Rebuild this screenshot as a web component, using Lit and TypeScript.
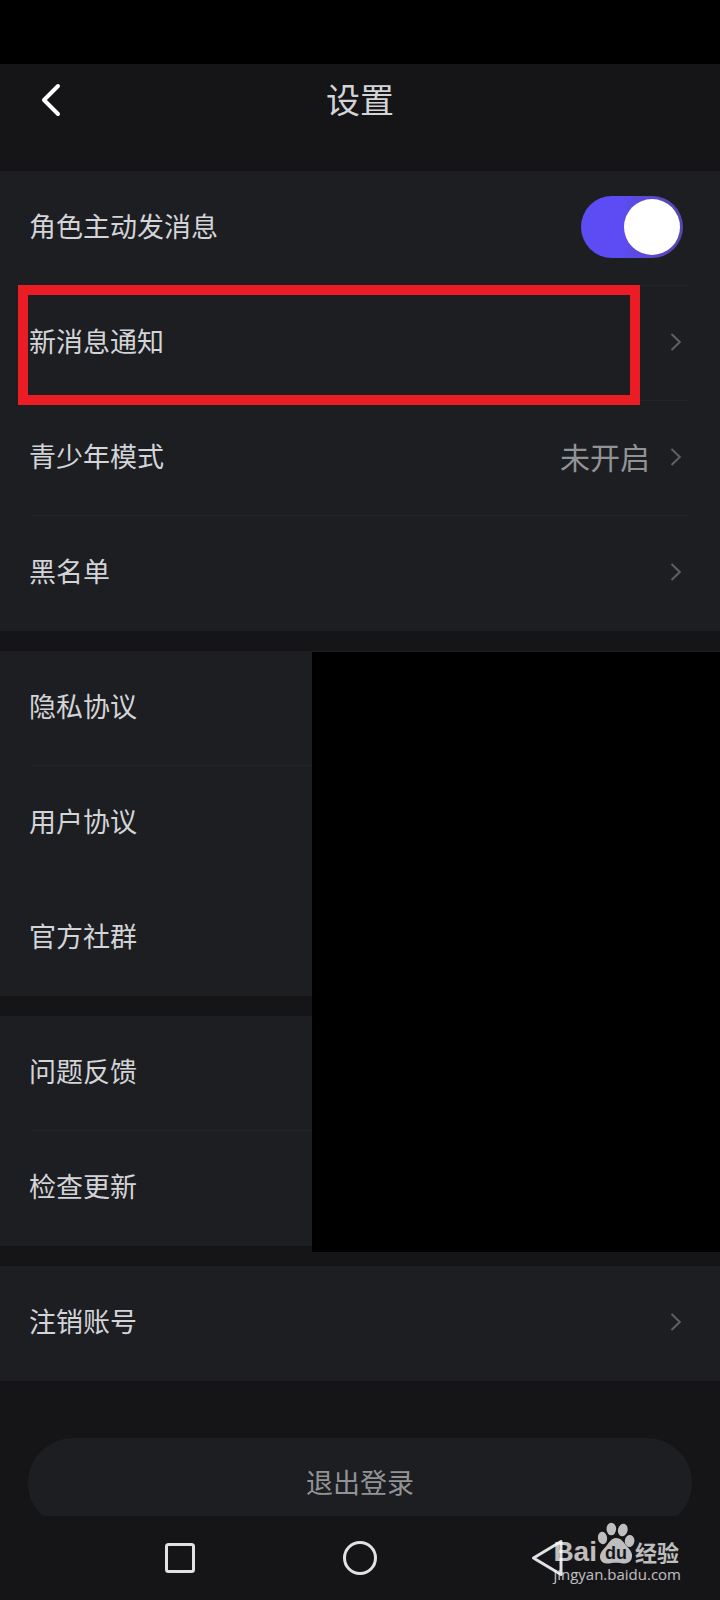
import { LitElement, html, css, svg, nothing } from "lit";
import { customElement, property, state } from "lit/decorators.js";

interface Item {
  label: string;
  value?: string;
  divider?: boolean;
  marked?: boolean;
}

const GENERAL: Item[] = [
  { label: "新消息通知", divider: true, marked: true },
  { label: "青少年模式", value: "未开启", divider: true },
  { label: "黑名单" },
];
const LEGAL: Item[] = [
  { label: "隐私协议", divider: true },
  { label: "用户协议" },
  { label: "官方社群" },
];
const SUPPORT: Item[] = [
  { label: "问题反馈", divider: true },
  { label: "检查更新" },
];
const ACCOUNT: Item[] = [{ label: "注销账号" }];

@customElement("settings-row")
export class SettingsRow extends LitElement {
  @property() label = "";
  @property() value = "";

  static styles = css`
    :host {
      display: block;
    }
    .row {
      box-sizing: border-box;
      width: 100%;
      height: 115px;
      padding: 0 38px 4px 29px;
      display: flex;
      align-items: center;
      border: 0;
      background: none;
      color: #d3d4d8;
      font: inherit;
      font-size: 27px;
      line-height: 40px;
      text-align: left;
      cursor: pointer;
    }
    .label {
      flex: 1;
      padding-bottom: 2px;
    }
    .value {
      margin-right: 20px;
      padding-bottom: 2px;
      font-size: 30px;
      color: #929397;
    }
    .chevron {
      display: block;
      width: 12px;
      height: 20px;
      fill: none;
      stroke: #5f6064;
      stroke-width: 2;
    }
  `;

  render() {
    return html`
      <button class="row" type="button">
        <span class="label">${this.label}</span>
        ${this.value ? html`<span class="value">${this.value}</span>` : nothing}
        <svg class="chevron" viewBox="0 0 12 20" aria-hidden="true">
          <path d="M1.5 2 L9.800 10 L1.5 18" />
        </svg>
      </button>
    `;
  }
}

@customElement("site-watermark")
export class SiteWatermark extends LitElement {
  static styles = css`
    :host {
      display: block;
      color: #fff;
      opacity: 0.72;
      pointer-events: none;
    }
    .brand {
      display: flex;
      align-items: flex-end;
      height: 42px;
    }
    .bai {
      font: bold 28px/24px "Liberation Sans", sans-serif;
    }
    .paw {
      display: block;
      width: 38px;
      height: 42px;
      fill: currentColor;
    }
    .du {
      font: bold 18px "Liberation Sans", sans-serif;
      fill: #161618;
    }
    .cn {
      font: bold 22px/26px "Noto Sans CJK SC", sans-serif;
    }
    .url {
      font: 500 15px/20px "Open Sans", sans-serif;
    }
  `;

  render() {
    return html`
      <div class="brand">
        <span class="bai">Bai</span>
        <svg class="paw" viewBox="0 0 38 42" aria-hidden="true">
          ${svg`
            <ellipse cx="5.5" cy="16" rx="4.6" ry="6.2" transform="rotate(-8 5.5 16)" />
            <ellipse cx="14.3" cy="7" rx="4.8" ry="6.3" />
            <ellipse cx="25.8" cy="8" rx="4.8" ry="6.3" transform="rotate(12 25.8 8)" />
            <ellipse cx="32.6" cy="19" rx="4.8" ry="6" transform="rotate(8 32.6 19)" />
            <path d="M19 16 C24.500 16 27 21 30 24.500 C33.500 28 36 31.500 34.800 36 C33.500 41 29 42 24.500 41.300 C21 40.700 17 40.700 13.500 41.300 C8.500 42 4.200 41 3.200 36.500 C2.200 32 5 28.500 8.500 25 C12 21.500 13.500 16 19 16 Z" />
            <text class="du" x="19" y="37" text-anchor="middle">du</text>
          `}
        </svg>
        <span class="cn">经验</span>
      </div>
      <div class="url">jingyan.baidu.com</div>
    `;
  }
}

@customElement("app-root")
export class AppRoot extends LitElement {
  @state() private proactive = true;

  static styles = css`
    :host {
      display: flex;
      flex-direction: column;
      height: 100vh;
      overflow: hidden;
      position: relative;
      background: #151517;
      color: #d3d4d8;
      font-family: "Noto Sans CJK SC", sans-serif;
    }
    .status {
      flex: none;
      height: 64px;
      background: #000;
    }
    .header {
      flex: none;
      display: grid;
      grid-template-columns: 60px 1fr 60px;
      align-items: center;
      height: 72px;
      margin-bottom: 35px;
      padding: 0 21px;
    }
    .back {
      display: grid;
      place-items: center;
      height: 60px;
      padding: 0;
      border: 0;
      background: none;
      cursor: pointer;
    }
    .back svg {
      width: 20px;
      height: 34px;
      fill: none;
      stroke: #fff;
      stroke-width: 4;
      stroke-linecap: round;
      stroke-linejoin: round;
    }
    .title {
      margin: 0;
      padding-bottom: 2px;
      font-size: 34px;
      line-height: 50px;
      font-weight: 400;
      text-align: center;
    }
    .content {
      flex: 1;
      min-height: 0;
      overflow: hidden;
    }
    .groups,
    .covered {
      display: flex;
      flex-direction: column;
      gap: 20px;
    }
    .covered {
      position: relative;
    }
    .cover {
      position: absolute;
      top: 1px;
      bottom: -6px;
      left: 312px;
      right: 0;
      background: #000;
    }
    .card {
      background: #1d1e21;
    }
    .item {
      position: relative;
    }
    .divider::after {
      content: "";
      position: absolute;
      left: 32px;
      right: 32px;
      bottom: 0;
      height: 1px;
      background: #242528;
    }
    .marker {
      position: absolute;
      z-index: 1;
      top: -1px;
      left: 18px;
      right: 80px;
      height: 100px;
      border: 10px solid #ec1c24;
      pointer-events: none;
    }
    .switch-row {
      box-sizing: border-box;
      display: flex;
      align-items: center;
      justify-content: space-between;
      height: 115px;
      padding: 0 37px 4px 29px;
      font-size: 27px;
      line-height: 40px;
    }
    .switch-label {
      padding-bottom: 2px;
    }
    .switch {
      appearance: none;
      box-sizing: border-box;
      display: flex;
      width: 102px;
      height: 62px;
      margin: 0;
      padding: 3px;
      border-radius: 31px;
      background: #44454a;
      cursor: pointer;
    }
    .switch:checked {
      justify-content: flex-end;
      background: linear-gradient(90deg, #5d4cf3 0 40%, #5647b4 90%);
    }
    .switch::before {
      content: "";
      width: 56px;
      height: 56px;
      border-radius: 50%;
      background: #fff;
    }
    .logout {
      display: block;
      width: calc(100% - 56px);
      height: 90px;
      margin: 57px 28px 0;
      padding: 0 0 2px;
      border: 0;
      border-radius: 45px;
      background: #1d1e21;
      color: #929397;
      font: inherit;
      font-size: 27px;
      line-height: 40px;
      cursor: pointer;
    }
    .nav {
      flex: none;
      display: grid;
      grid-template-columns: repeat(3, 1fr);
      height: 84px;
      padding: 0 12.5%;
    }
    .key {
      display: grid;
      place-items: center;
      padding: 0;
      border: 0;
      background: none;
      cursor: pointer;
    }
    .key svg {
      width: 50px;
      height: 40px;
      fill: none;
      stroke: #e2e2e3;
      stroke-width: 3;
      stroke-linejoin: round;
    }
    .watermark {
      position: absolute;
      right: 39px;
      bottom: 16px;
    }
  `;

  private group(items: Item[]) {
    return items.map(
      (item) => html`
        <div class="item ${item.divider ? "divider" : ""}">
          <settings-row .label=${item.label} .value=${item.value ?? ""}></settings-row>
          ${item.marked ? html`<div class="marker"></div>` : nothing}
        </div>
      `
    );
  }

  private toggle(e: Event) {
    this.proactive = (e.target as HTMLInputElement).checked;
  }

  render() {
    return html`
      <div class="status"></div>
      <header class="header">
        <button class="back" type="button" aria-label="返回">
          <svg viewBox="0 0 20 34"><path d="M17 3 L3 17 L17 31" /></svg>
        </button>
        <h1 class="title">设置</h1>
      </header>
      <main class="content">
        <div class="groups">
          <section class="card">
            <div class="item divider">
              <div class="switch-row">
                <label class="switch-label" for="proactive">角色主动发消息</label>
                <input
                  id="proactive"
                  class="switch"
                  type="checkbox"
                  role="switch"
                  .checked=${this.proactive}
                  @change=${this.toggle}
                />
              </div>
            </div>
            ${this.group(GENERAL)}
          </section>
          <div class="covered">
            <section class="card">${this.group(LEGAL)}</section>
            <section class="card">${this.group(SUPPORT)}</section>
            <div class="cover"></div>
          </div>
          <section class="card">${this.group(ACCOUNT)}</section>
        </div>
        <button class="logout" type="button">退出登录</button>
      </main>
      <nav class="nav">
        <button class="key" type="button" aria-label="最近任务">
          <svg viewBox="0 0 50 40"><rect x="11.500" y="6.500" width="27" height="27" rx="2" /></svg>
        </button>
        <button class="key" type="button" aria-label="主屏幕">
          <svg viewBox="0 0 50 40"><circle cx="25" cy="20" r="15.500" /></svg>
        </button>
        <button class="key" type="button" aria-label="后退">
          <svg viewBox="0 0 50 40"><path d="M18.500 20 L46 3.500 V36.500 Z" /></svg>
        </button>
      </nav>
      <site-watermark class="watermark"></site-watermark>
    `;
  }
}
